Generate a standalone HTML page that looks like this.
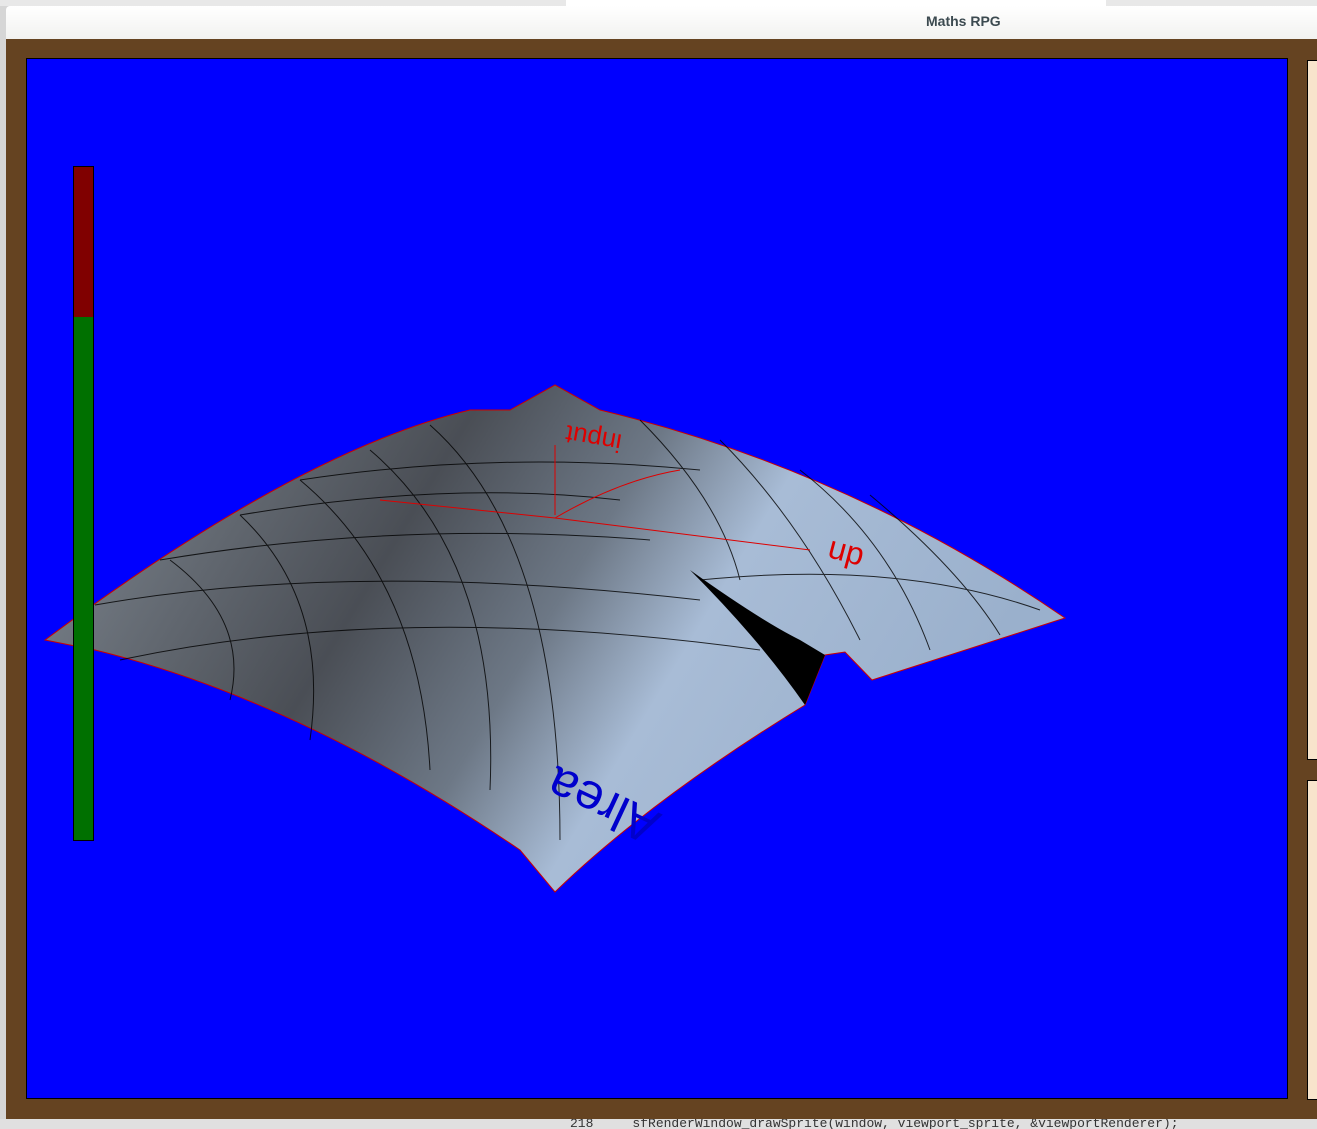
<!DOCTYPE html>
<html><head><style>
body{margin:0;width:1317px;height:1129px;overflow:hidden;background:#d6d6d6;font-family:"Liberation Sans",sans-serif;position:relative}
.abs{position:absolute}
</style></head><body>
<div class="abs" style="left:0;top:0;width:1317px;height:6px;background:#e8e8e8"></div>
<div class="abs" style="left:566px;top:0;width:540px;height:6px;background:#fff"></div>
<div class="abs" style="left:0;top:1119px;width:1317px;height:10px;background:#e0e0e0;font:13px 'Liberation Mono',monospace;color:#333;line-height:10px;overflow:hidden"><span style="margin-left:570px">218&nbsp;&nbsp;&nbsp;&nbsp;&nbsp;sfRenderWindow_drawSprite(window, viewport_sprite, &amp;viewportRenderer);</span></div>
<div class="abs" style="left:6px;top:6px;width:1311px;height:33px;background:linear-gradient(#fff,#f2f2f0);border-radius:4px 0 0 0"></div>
<div class="abs" style="left:926px;top:13px;font-size:14px;font-weight:bold;color:#3c4a50">Maths RPG</div>
<div class="abs" style="left:6px;top:39px;width:1311px;height:1080px;background:#654321"></div>
<div class="abs" style="left:26px;top:58px;width:1260px;height:1039px;background:#0000ff;border:1px solid #000"></div>
<div class="abs" style="left:1307px;top:60px;width:10px;height:698px;background:#f8e4cc;border:1px solid #000;border-right:0"></div>
<div class="abs" style="left:1307px;top:780px;width:10px;height:318px;background:#f8e4cc;border:1px solid #000;border-right:0"></div>
<svg class="abs" style="left:0;top:0" width="1317" height="1129">
<defs>
<linearGradient id="g" x1="0" y1="0" x2="1" y2="0.3">
<stop offset="0" stop-color="#858e98"/><stop offset="0.4" stop-color="#4a4e55"/><stop offset="0.58" stop-color="#6d7886"/><stop offset="0.72" stop-color="#a8bcd6"/><stop offset="1" stop-color="#9ab0cc"/>
</linearGradient>
</defs>
<path d="M45,640 Q300,450 470,410 L510,410 L555,385 L600,410 Q850,470 1065,618 L872,680 L845,652 L825,655 L805,705 Q650,800 555,892 L520,850 Q300,700 95,650 Z" fill="url(#g)" stroke="#c00" stroke-width="1"/>
<path d="M690,570 Q760,620 800,640 L825,655 L805,705 Q760,640 690,570Z" fill="#000"/>
<g stroke="#000" stroke-width="1" fill="none" opacity="0.8">
<path d="M95,605 Q350,560 700,600"/><path d="M120,660 Q400,600 760,650"/><path d="M160,560 Q400,520 650,540"/><path d="M240,515 Q450,480 620,500"/><path d="M300,480 Q500,450 700,470"/>
<path d="M170,560 Q250,620 230,700"/><path d="M240,515 Q330,600 310,740"/><path d="M300,480 Q420,580 430,770"/><path d="M370,450 Q500,560 490,790"/><path d="M430,425 Q560,540 560,840"/>
<path d="M640,420 Q720,500 740,580"/><path d="M720,440 Q800,520 860,640"/><path d="M800,470 Q890,540 930,650"/><path d="M870,495 Q960,570 1000,635"/><path d="M700,580 Q900,560 1040,610"/>
</g>
<g stroke="#d00" stroke-width="1" fill="none"><path d="M555,515 L555,445"/><path d="M380,500 L555,518 L810,550"/><path d="M555,518 Q620,480 680,470"/></g>
<text x="0" y="0" transform="translate(595,430) rotate(190)" font-size="26" fill="#d00" text-anchor="middle">input</text>
<text x="0" y="0" transform="translate(848,545) rotate(195)" font-size="32" fill="#d00" text-anchor="middle">dn</text>
<text x="0" y="0" transform="translate(610,790) rotate(205)" font-size="50" fill="#00c" text-anchor="middle">Alrea</text>
</svg>
<div class="abs" style="left:73px;top:166px;width:19px;height:151px;background:#800000;border:1px solid #000;border-bottom:0"></div>
<div class="abs" style="left:73px;top:317px;width:19px;height:523px;background:#007000;border:1px solid #000;border-top:0"></div>
</body></html>
